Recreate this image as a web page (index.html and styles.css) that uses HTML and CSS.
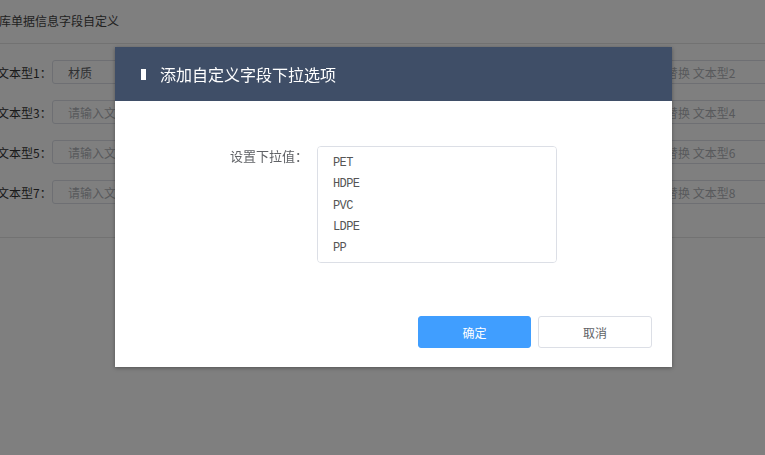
FILE: index.html
```html
<!DOCTYPE html>
<html lang="zh-CN">
<head>
  <meta charset="UTF-8" />
  <meta name="viewport" content="width=device-width, initial-scale=1.0"/>
  <title>仓库单据信息字段自定义</title>
  <link rel="stylesheet" href="styles.css">
</head>
<body>
  <div class="page">
    <div class="page-title">仓库单据信息字段自定义</div>

    <div class="form">
      <div class="field">
        <label>文本型1：</label>
        <input type="text" value="材质" />
      </div>
      <div class="field">
        <label>文本型2：</label>
        <input type="text" placeholder="请输入替换 文本型2" />
      </div>
      <div class="field">
        <label>文本型3：</label>
        <input type="text" placeholder="请输入文本型3" />
      </div>
      <div class="field">
        <label>文本型4：</label>
        <input type="text" placeholder="请输入替换 文本型4" />
      </div>
      <div class="field">
        <label>文本型5：</label>
        <input type="text" placeholder="请输入文本型5" />
      </div>
      <div class="field">
        <label>文本型6：</label>
        <input type="text" placeholder="请输入替换 文本型6" />
      </div>
      <div class="field">
        <label>文本型7：</label>
        <input type="text" placeholder="请输入文本型7" />
      </div>
      <div class="field">
        <label>文本型8：</label>
        <input type="text" placeholder="请输入替换 文本型8" />
      </div>
    </div>
  </div>

  <div class="mask"></div>

  <div class="dialog">
    <div class="dialog-header">
      <span class="bar"></span>
      <span class="dialog-title">添加自定义字段下拉选项</span>
    </div>
    <div class="dialog-body">
      <label class="option-label">设置下拉值：</label>
      <textarea class="options" readonly>PET
HDPE
PVC
LDPE
PP</textarea>
    </div>
    <div class="dialog-footer">
      <button class="btn btn-primary">确定</button>
      <button class="btn">取消</button>
    </div>
  </div>
</body>
</html>
```

FILE: styles.css
```css
* { box-sizing: border-box; }

html, body {
  margin: 0;
  height: 100%;
  overflow: hidden;
}

body {
  font-family: "Noto Sans CJK SC", "Liberation Sans", sans-serif;
  background: #fff;
  color: #555;
  font-size: 12px;
}

.page {
  width: 820px;
  margin-left: -3px;
}

.page-title {
  height: 44px;
  line-height: 42px;
  font-size: 12px;
  color: #444;
  border-bottom: 1px solid #e4e4e4;
  text-indent: -10px;
  white-space: nowrap;
}

.form {
  display: grid;
  grid-template-columns: 562px 1fr;
  row-gap: 16px;
  padding: 16px 0 33px;
  border-bottom: 1px solid #e4e4e4;
}

.field {
  display: flex;
  align-items: center;
  height: 24px;
}

.field label {
  width: 55px;
  font-size: 12px;
  color: #333;
  white-space: nowrap;
}

.field input {
  flex: 1;
  height: 24px;
  border: 1px solid #dcdfe6;
  border-radius: 3px;
  padding: 0 15px;
  font-family: inherit;
  font-size: 12px;
  color: #606266;
  outline: none;
}

.field:nth-child(odd) input {
  flex: 0 0 300px;
}

.field input::placeholder {
  color: #b0b3b8;
}

.mask {
  position: fixed;
  inset: 0;
  background: rgba(0, 0, 0, 0.5);
}

.dialog {
  position: absolute;
  left: 115px;
  top: 47px;
  width: 557px;
  height: 320px;
  background: #fff;
  box-shadow: 0 1px 4px rgba(0, 0, 0, 0.35);
  display: flex;
  flex-direction: column;
}

.dialog-header {
  height: 54px;
  background: #3f4e67;
  display: flex;
  align-items: center;
  padding-left: 26px;
  gap: 14px;
}

.bar {
  width: 5px;
  height: 11px;
  background: #fff;
}

.dialog-title {
  color: #fff;
  font-size: 16px;
}

.dialog-body {
  display: flex;
  align-items: flex-start;
  padding: 45px 0 0 115px;
  gap: 9px;
}

.option-label {
  font-size: 13px;
  color: #606266;
  line-height: 18px;
  padding-top: 1px;
}

.options {
  width: 240px;
  height: 117px;
  border: 1px solid #dcdfe6;
  border-radius: 4px;
  padding: 6px 15px 4px;
  resize: none;
  outline: none;
  font-family: "Liberation Mono", monospace;
  font-size: 12px;
  letter-spacing: -0.6px;
  line-height: 21.25px;
  color: #555;
}

.dialog-footer {
  margin-top: auto;
  display: flex;
  justify-content: flex-end;
  gap: 7px;
  padding: 0 20px 19px 0;
}

.btn {
  width: 114px;
  height: 32px;
  border: 1px solid #dcdfe6;
  border-radius: 3px;
  background: #fff;
  color: #606266;
  font-family: inherit;
  font-size: 12px;
  cursor: pointer;
}

.btn-primary {
  width: 113px;
  background: #409eff;
  border-color: #409eff;
  color: #fff;
}
```
